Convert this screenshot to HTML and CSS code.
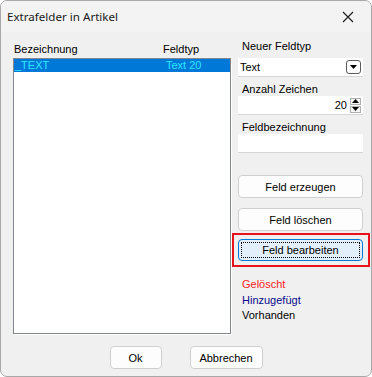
FILE: index.html
```html
<!DOCTYPE html>
<html lang="de">
<head>
    <meta charset="UTF-8">
    <meta name="viewport" content="width=device-width, initial-scale=1.0">
    <title>Extrafelder in Artikel</title>
    <link rel="stylesheet" href="styles.css">
</head>
<body>
    <div class="window">
        <div class="titlebar">
            <span class="title">Extrafelder in Artikel</span>
            <span class="close">
                <svg width="12" height="12" viewBox="0 0 12 12"><path d="M1 1L11 11M11 1L1 11" stroke="#1a1a1a" stroke-width="1.1" fill="none"/></svg>
            </span>
        </div>

        <div class="content">
            <div class="left">
                <div class="list-head">
                    <span class="col-name">Bezeichnung</span>
                    <span class="col-type">Feldtyp</span>
                </div>
                <div class="listbox">
                    <div class="row selected">
                        <span class="col-name">_TEXT</span>
                        <span class="col-type">Text 20</span>
                    </div>
                </div>
            </div>

            <div class="right">
                <label class="field-label first">Neuer Feldtyp</label>
                <div class="combo">
                    <span>Text</span>
                    <span class="combo-btn">
                        <svg width="7" height="4" viewBox="0 0 7 4"><path d="M0 0H7L3.5 4Z" fill="#000"/></svg>
                    </span>
                </div>

                <label class="field-label">Anzahl Zeichen</label>
                <div class="spin">
                    <span class="spin-value">20</span>
                    <span class="spin-btns">
                        <span class="spin-btn"><svg width="7" height="4" viewBox="0 0 7 4"><path d="M0 4H7L3.5 0Z" fill="#000"/></svg></span>
                        <span class="spin-btn"><svg width="7" height="4" viewBox="0 0 7 4"><path d="M0 0H7L3.5 4Z" fill="#000"/></svg></span>
                    </span>
                </div>

                <label class="field-label">Feldbezeichnung</label>
                <div class="textbox"></div>

                <button class="btn side-btn first">Feld erzeugen</button>
                <button class="btn side-btn">Feld löschen</button>
                <div class="highlight">
                    <button class="btn side-btn focused"><span class="focus-rect">Feld bearbeiten</span></button>
                </div>

                <div class="legend">
                    <div class="deleted">Gelöscht</div>
                    <div class="added">Hinzugefügt</div>
                    <div class="existing">Vorhanden</div>
                </div>
            </div>
        </div>

        <div class="footer">
            <button class="btn ok-btn">Ok</button>
            <button class="btn cancel-btn">Abbrechen</button>
        </div>
    </div>
</body>
</html>
```

FILE: styles.css
```css
body {
    margin: 0;
    background-color: #ffffff;
    font-family: "Liberation Sans", Arial, sans-serif;
    font-size: 11px;
    color: #000;
}

.window {
    width: 372px;
    height: 377px;
    box-sizing: border-box;
    border: 1px solid #a8a8a8;
    border-radius: 7px;
    background-color: #f0f0f0;
    overflow: hidden;
    display: flex;
    flex-direction: column;
}

.titlebar {
    height: 31px;
    flex-shrink: 0;
    background-color: #f3f3f3;
    display: flex;
    align-items: center;
    justify-content: space-between;
    padding-left: 6px;
}

.title {
    font-family: "Noto Sans", sans-serif;
    font-size: 11.6px;
    color: #1a1a1a;
    padding-bottom: 1px;
}

.close {
    width: 46px;
    display: flex;
    justify-content: center;
    padding-top: 1px;
}

.content {
    display: flex;
    padding-left: 12px;
    height: 304px;
    flex-shrink: 0;
}

.left {
    width: 218px;
    display: flex;
    flex-direction: column;
}

.list-head {
    display: flex;
    height: 26px;
    align-items: flex-end;
    padding-bottom: 3px;
    box-sizing: border-box;
}

.list-head .col-name {
    width: 149px;
    padding-left: 1px;
}

.col-type {
    flex: 1;
}

.listbox {
    height: 276px;
    background-color: #fff;
    border: 1px solid #82878f;
    box-shadow: 1px 1px 0 #ffffff;
    box-sizing: border-box;
}

.row {
    display: flex;
    height: 13px;
    line-height: 13px;
}

.row .col-name {
    width: 148px;
    padding-left: 1px;
}

.row .col-type {
    padding-left: 3px;
}

.selected {
    background-color: #0078d7;
    color: #2ee6ff;
}

.right {
    width: 125px;
    margin-left: 7px;
    display: flex;
    flex-direction: column;
}

.field-label {
    display: block;
    height: 19px;
    line-height: 20px;
    padding-top: 2px;
    padding-left: 4px;
    box-sizing: border-box;
}

.field-label.first {
    height: 26px;
    padding-top: 4px;
}

.combo {
    height: 19px;
    box-sizing: border-box;
    background-color: #fff;
    border-bottom: 1px solid #d6d6d6;
    display: flex;
    align-items: center;
    justify-content: space-between;
    padding-left: 2px;
    padding-right: 2px;
}

.combo-btn {
    width: 13px;
    height: 12px;
    border: 1px solid #5a5a5a;
    border-radius: 3px;
    display: flex;
    align-items: center;
    justify-content: center;
}

.spin {
    height: 19px;
    box-sizing: border-box;
    background-color: #fff;
    border-bottom: 1px solid #d6d6d6;
    display: flex;
    align-items: center;
    justify-content: flex-end;
    padding-right: 2px;
}

.spin-value {
    margin-right: 3px;
}

.spin-btns {
    display: flex;
    flex-direction: column;
    gap: 1px;
}

.spin-btn {
    width: 11px;
    height: 7px;
    border: 1px solid #b0b0b0;
    background-color: #f4f4f4;
    display: flex;
    align-items: center;
    justify-content: center;
    box-sizing: border-box;
}

.textbox {
    height: 19px;
    box-sizing: border-box;
    background-color: #fff;
    border-bottom: 1px solid #d6d6d6;
}

.btn {
    font-family: "Liberation Sans", Arial, sans-serif;
    font-size: 11px;
    color: #000;
    background-color: #fdfdfd;
    border: 1px solid #d0d0d0;
    border-radius: 4px;
    padding: 0;
    cursor: pointer;
}

.side-btn {
    height: 23px;
    width: 125px;
    margin-top: 10px;
    flex-shrink: 0;
}

.side-btn.first {
    margin-top: 22px;
}

.highlight {
    margin-top: 2px;
    margin-left: -6px;
    width: 138px;
    height: 34px;
    flex-shrink: 0;
    border: 2px solid #e8141c;
    box-sizing: border-box;
    padding: 4px 0 0 4px;
}

.highlight .side-btn {
    margin-top: 0;
    height: 22px;
}

.focused {
    background-color: #e3effa;
    border-color: #0078d7;
    padding: 2px;
}

.focus-rect {
    display: flex;
    height: 100%;
    align-items: center;
    justify-content: center;
    border: 1px dotted #000;
    box-sizing: border-box;
}

.legend {
    margin-top: 10px;
    padding-left: 4px;
    line-height: 15.5px;
}

.deleted {
    color: #ff1c24;
}

.added {
    color: #0a0a8c;
}

.existing {
    color: #000;
}

.footer {
    display: flex;
    justify-content: center;
    gap: 28px;
    padding-top: 10px;
}

.ok-btn {
    width: 52px;
    height: 23px;
}

.cancel-btn {
    width: 73px;
    height: 23px;
}
```
